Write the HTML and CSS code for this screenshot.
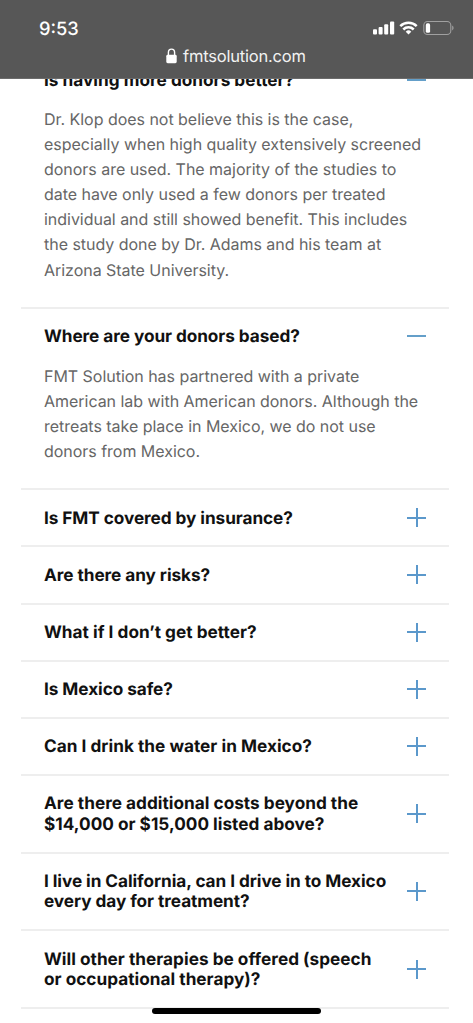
FILE: index.html
```html
<!DOCTYPE html>
<html lang="en">
<head>
<meta charset="utf-8">
<meta name="viewport" content="width=device-width, initial-scale=1">
<title>FMT Solution FAQ</title>
<link rel="stylesheet" href="styles.css">
</head>
<body>
<div class="screen">
  <header class="browser-bar">
    <div class="status">
      <span class="time">9:53</span>
      <svg class="status-icons" width="84" height="18" viewBox="0 0 84 18">
        <g fill="#fff">
          <rect x="2" y="10.3" width="4" height="5.2" rx="1"/>
          <rect x="7.6" y="8" width="4" height="7.5" rx="1"/>
          <rect x="13.2" y="5.2" width="4" height="10.3" rx="1"/>
          <rect x="19" y="2.5" width="4.2" height="13" rx="1"/>
          <path d="M37.5 15.5 L34.7 12.7 A4 4 0 0 1 40.3 12.7 Z"/>
        </g>
        <g fill="none" stroke="#fff" stroke-width="2.5">
          <path d="M29.3 7.2 A11.7 11.7 0 0 1 45.7 7.2"/>
          <path d="M32.3 10.5 A7.4 7.4 0 0 1 42.7 10.5"/>
        </g>
        <rect x="52.8" y="2.5" width="27" height="13" rx="3.8" fill="none" stroke="#a0a0a0" stroke-width="1.1"/>
        <rect x="54.8" y="4.3" width="4.3" height="9.5" rx="1.6" fill="#fff"/>
        <path d="M81.2 6.6 Q82.6 7.6 82.6 9 Q82.6 10.4 81.2 11.4 Z" fill="#a0a0a0"/>
      </svg>
    </div>
    <div class="address">
      <svg class="lock" width="11" height="16" viewBox="0 0 11 16">
        <path d="M2.4 8 V4.5 a3.1 3.4 0 0 1 6.2 0 V8" fill="none" stroke="#fff" stroke-width="1.4"/>
        <rect x="0.3" y="6.8" width="10.4" height="8.4" rx="1.4" fill="#fff"/>
      </svg>
      <span class="domain">fmtsolution.com</span>
    </div>
  </header>

  <main class="faq">
    <section class="item">
      <h3 class="question first"><span>Is having more donors better?</span><i class="toggle open"></i></h3>
      <p class="answer">Dr. Klop does not believe this is the case,<br>especially when high quality extensively screened<br>donors are used. The majority of the studies to<br>date have only used a few donors per treated<br>individual and still showed benefit. This includes<br>the study done by Dr. Adams and his team at<br>Arizona State University.</p>
    </section>
    <section class="item">
      <h3 class="question snug"><span>Where are your donors based?</span><i class="toggle open"></i></h3>
      <p class="answer">FMT Solution has partnered with a private<br>American lab with American donors. Although the<br>retreats take place in Mexico, we do not use<br>donors from Mexico.</p>
    </section>
    <section class="item"><h3 class="question snug"><span>Is FMT covered by insurance?</span><i class="toggle"></i></h3></section>
    <section class="item"><h3 class="question snug"><span>Are there any risks?</span><i class="toggle"></i></h3></section>
    <section class="item"><h3 class="question"><span>What if I don’t get better?</span><i class="toggle"></i></h3></section>
    <section class="item"><h3 class="question snug"><span>Is Mexico safe?</span><i class="toggle"></i></h3></section>
    <section class="item"><h3 class="question"><span>Can I drink the water in Mexico?</span><i class="toggle"></i></h3></section>
    <section class="item"><h3 class="question"><span>Are there additional costs beyond the<br>$14,000 or $15,000 listed above?</span><i class="toggle"></i></h3></section>
    <section class="item"><h3 class="question snug"><span>I live in California, can I drive in to Mexico<br>every day for treatment?</span><i class="toggle"></i></h3></section>
    <section class="item"><h3 class="question"><span>Will other therapies be offered (speech<br>or occupational therapy)?</span><i class="toggle"></i></h3></section>
  </main>
  <div class="home-indicator"></div>
</div>
</body>
</html>
```
FILE: styles.css
```css
* { box-sizing: border-box; }

body {
  margin: 0;
  background: #fff;
  font-family: Inter, "Liberation Sans", sans-serif;
  text-rendering: geometricPrecision;
}

.screen {
  position: relative;
  height: 1023px;
  overflow: hidden;
}

.browser-bar {
  position: absolute;
  inset: 0 0 auto;
  z-index: 1;
  height: 79px;
  padding: 17px 18px 0 39px;
  background: #575757;
  border-bottom: 1px solid #6c6c6c;
  color: #fff;
}

.status {
  display: flex;
  justify-content: space-between;
  height: 23px;
}

.time {
  padding-top: 1px;
  font-size: 18.3px;
  line-height: 22px;
  font-weight: 500;
}

.status-icons { margin: 2px 0 0; }

.address {
  display: flex;
  align-items: center;
  height: 24px;
  margin: 4px 0 0 127px;
  gap: 6px;
  color: #f2f2f2;
}

.domain {
  font-size: 16.5px;
  line-height: 24px;
  letter-spacing: -0.2px;
  white-space: nowrap;
}

.faq {
  padding: 52px 24.5px 0 21px;
}

.item {
  padding-bottom: 0.1px;
  border-bottom: 2px solid #eee;
}

.question {
  display: flex;
  align-items: center;
  justify-content: space-between;
  margin: 0;
  padding: 17.15px 22.5px 17.15px 23px;
  color: #111;
  font-size: 17.2px;
  line-height: 20.7px;
  font-weight: 650;
  letter-spacing: 0.02px;
  white-space: nowrap;
}

.question.snug { letter-spacing: -0.06px; }

.question.first {
  padding-top: 18.15px;
  padding-bottom: 16.15px;
}

.question span {
  margin: 1.1px 0 -1.1px;
}

.toggle {
  width: 19px;
  height: 19px;
  margin: -1px 0;
  background:
    linear-gradient(#5b98cb, #5b98cb) center / 19px 2px no-repeat,
    linear-gradient(#5b98cb, #5b98cb) center / 2px 19px no-repeat;
}

.toggle.open {
  background: linear-gradient(#649fc9, #649fc9) center / 19px 2px no-repeat;
}

.answer {
  margin: 0;
  padding: 0 0 24.1px 23px;
  color: #666;
  font-size: 16px;
  line-height: 25.1px;
  letter-spacing: -0.03px;
  white-space: nowrap;
}

.home-indicator {
  position: absolute;
  left: 152px;
  top: 1008px;
  z-index: 1;
  width: 169px;
  height: 6px;
  border-radius: 3px;
  background: #000;
}
```
